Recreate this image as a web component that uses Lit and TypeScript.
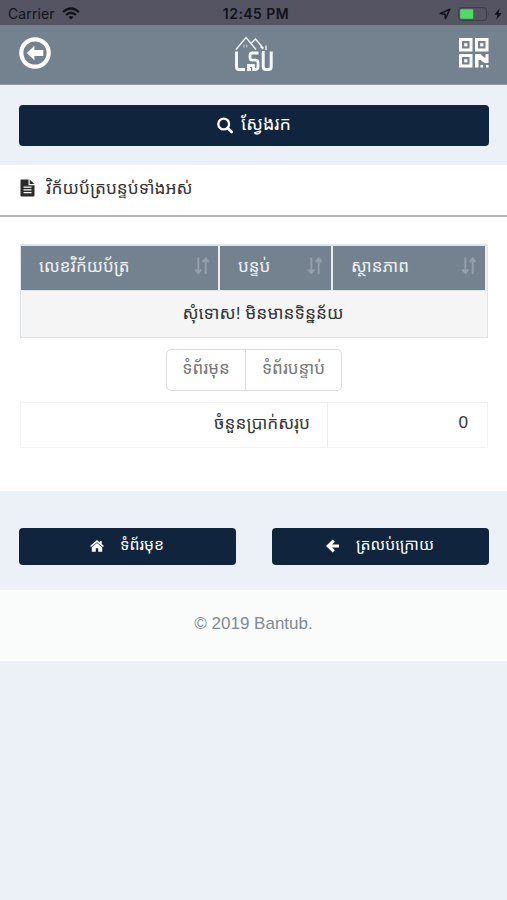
import { LitElement, html, css, svg } from "lit";
import { customElement } from "lit/decorators.js";

const sortIcon = html`<svg class="sort" viewBox="0 0 16 18" width="16" height="18">
  <path d="M4.300 0.500V15M1.300 12.500L4.300 16L7.300 12.500M11.700 17V3M8.700 5L11.700 1.500L14.700 5" fill="none" stroke="currentColor" stroke-width="2"/>
</svg>`;

const finder = (x: number, y: number) =>
  svg`<path d="M${x} ${y}h13.500v13.500h-13.500zM${x + 3} ${y + 3}v7.500h7.500v-7.500z" fill-rule="evenodd"/><rect x="${x + 5.2}" y="${y + 5.2}" width="3.200" height="3.200"/>`;

const wifiIcon = html`<svg width="18" height="13" viewBox="0 0 18 13" fill="none" stroke="currentColor" stroke-width="2.300">
  <path d="M1 5Q9-2 17 5M4 8Q9 3.500 14 8"/>
  <path d="M9 12.500L6.500 10Q9 8 11.500 10Z" fill="currentColor" stroke="none"/>
</svg>`;

const locationIcon = html`<svg width="12" height="12" viewBox="0 0 12 12" fill="none" stroke="currentColor" stroke-width="1.500" stroke-linejoin="round">
  <path d="M10.800 1.200L1.200 5.600L6 6.200L6.500 10.800Z"/>
</svg>`;

const batteryIcon = html`<svg width="33" height="14" viewBox="0 0 33 14">
  <rect x="0.600" y="0.600" width="28" height="12.800" rx="3" fill="none" stroke="#3c3c47" stroke-width="1"/>
  <rect x="2.200" y="2.200" width="13" height="9.600" rx="0.800" fill="#50dc64"/>
  <path d="M30.200 5Q32 7 30.200 9Z" fill="#3c3c47"/>
</svg>`;

const boltIcon = html`<svg width="8" height="12" viewBox="0 0 8 12" fill="currentColor"><path d="M5.600 0.300L0.400 6.800H3.400L2.300 11.700L7.700 4.900H4.600Z"/></svg>`;

const backIcon = html`<svg width="34" height="34" viewBox="0 0 34 34">
  <circle cx="17" cy="17" r="13.700" fill="none" stroke="#fff" stroke-width="4.200"/>
  <path d="M8.800 17L16.400 9.800V14H25.300V20H16.400V24.200Z" fill="#fff"/>
</svg>`;

const logo = html`<svg class="logo" width="40" height="38" viewBox="0 0 40 38" fill="none" stroke="#f4f7f9">
  <path d="M2 14.500L12 2.500L22 14.500M17 8.500L21.500 4L29.500 13.500M26.500 11.500L29 14M32 10.500V15" stroke-width="1.300"/>
  <path d="M10 9.500V12.500M12.800 9.500V12.500" stroke-width="1.400" opacity="0.500"/>
  <path d="M2.500 16.500V31.500Q2.500 34.500 5 34.500H11" stroke-width="3"/>
  <path d="M24.500 18H18.200Q16 18 16 20.500V22.500Q16 25.200 18.200 25.200H21.500Q24 25.200 24 27.700V31.800Q24 34.500 21.500 34.500H19.500V30.500H14.500V34.500H17" stroke-width="2.800"/>
  <path d="M28 17.500H29.200V31.500Q29.200 34.500 32 34.500H34.200Q37.200 34.500 37.200 31.500V16.500" stroke-width="3"/>
</svg>`;

const qrIcon = html`<svg width="30" height="30" viewBox="0 0 30 30" fill="#fff">
  ${finder(0, 0)}${finder(16, 0)}${finder(0, 16)}
  <path d="M16 16H21.500L25 19.500H26.500V16H29.500V25H25.500L21.500 22H19.500V29.500H16ZM21.500 27H24V29.500H21.500ZM27 27H29.500V29.500H27Z"/>
</svg>`;

const searchIcon = html`<svg width="16" height="17" viewBox="0 0 16 17" fill="none" stroke="currentColor">
  <circle cx="6.700" cy="7" r="5.400" stroke-width="2.300"/><path d="M10.600 11L14.600 15" stroke-width="2.700" stroke-linecap="round"/>
</svg>`;

const fileIcon = html`<svg width="15" height="18" viewBox="0 0 15 18" fill="#2c2c2c" fill-rule="evenodd">
  <path d="M1 0.500H8.500V6.200H14.500V16.500Q14.500 17.500 13.500 17.500H1.500Q0.500 17.500 0.500 16.500V1Q0.500 0.500 1 0.500ZM3.500 7.500V8.700H11.500V7.500ZM3.500 10.300V11.500H11.500V10.300ZM3.500 13.100V14.300H11.500V13.100Z"/>
  <path d="M9.700 0.500L14.300 5H9.700Z"/>
</svg>`;

const homeIcon = html`<svg width="14" height="12" viewBox="0 0 14 12" fill="currentColor">
  <path d="M7 0.100L9.800 2.400V1H11.700V4L13.900 5.900L12.900 7.100L7 2.300L1.100 7.100L0.100 5.900Z"/>
  <path d="M7 2.900L12.200 7.200V11.700H8.200V8.300H5.800V11.700H1.800V7.200Z"/>
</svg>`;

const arrowIcon = html`<svg width="14" height="14" viewBox="0 0 14 14" fill="none" stroke="currentColor">
  <path d="M7.800 1.700L2.200 7L7.800 12.300M2.500 7H13" stroke-width="3.100"/>
</svg>`;

@customElement("app-root")
export class AppRoot extends LitElement {
  static styles = css`
    :host { display: block; min-height: 900px; background: #ecf0f7; color: #333;
      font-family: "Liberation Sans", "Noto Sans Khmer", "Khmer OS Battambang", Battambang, sans-serif; font-size: 17px; }
    * { box-sizing: border-box; }
    svg { display: block; flex: none; }
    .status { height: 25px; background: #545463; color: #11121a; display: grid; grid-template-columns: 1fr auto 1fr; align-items: center; padding: 2px 5px 0 8px; }
    .left, .right { display: flex; align-items: center; }
    .left { gap: 7px; font-family: Inter, sans-serif; font-size: 14px; letter-spacing: 0.100px; }
    .right { justify-content: flex-end; }
    .right svg + svg { margin-left: 7px; }
    .right svg:last-child { margin-left: 3px; }
    .time { font-weight: 600; font-family: Inter, sans-serif; font-size: 14px; letter-spacing: 0.450px; margin-left: 2px; }
    .bar { height: 60px; background: #74828f; border-bottom: 1px solid #8f9aa5; display: grid; grid-template-columns: 1fr auto 1fr; align-items: center; padding: 0 18px 4px 18px; color: #fff; }
    .logo { margin-top: 3px; }
    .bar svg:last-child { justify-self: end; }
    .search-area { height: 80px; padding: 20px 18px 0 19px; }
    .btn { background: #10243e; color: #fff; border-radius: 4px; display: flex; align-items: center; justify-content: center; white-space: nowrap; }
    .search { height: 41px; gap: 8px; font-size: 18px; padding-bottom: 5px; }
    .search svg { margin-top: 4px; }
    .panel { background: #fff; height: 326px; }
    .title { height: 52px; border-bottom: 2px solid #b5b5b5; padding: 0 20px 6px; display: flex; align-items: center; gap: 11px; white-space: nowrap; font-size: 17.250px; }
    .title svg { margin-top: 2px; }
    .content { padding: 27px 19px 0 20px; }
    .table { border: 1px solid #dfe4e8; border-top-width: 2px; height: 94px; margin-bottom: 11px; }
    .head { display: grid; grid-template-columns: 199px 113px 1fr; height: 45px; background: #74828f; color: #eef2f5; border-bottom: 1px solid #e3e7ea; }
    .th { display: flex; align-items: center; justify-content: space-between; padding: 0 8px 6px 18px; white-space: nowrap; border-right: 2px solid #e8edf0; }
    .th svg { margin-top: 2px; }
    .sort { color: #939faa; }
    .empty { height: 46px; background: #f5f5f5; display: flex; align-items: center; justify-content: center; padding: 0 0 5px 18px; white-space: nowrap; font-size: 17.400px; }
    .pager { display: flex; width: 176px; height: 42px; margin: 0 0 11px 146px; border: 1px solid #ddd; border-radius: 5px; color: #777; }
    .page { display: flex; align-items: center; justify-content: center; width: 78px; padding-bottom: 6px; white-space: nowrap; }
    .page + .page { width: 96px; border-left: 1px solid #ddd; }
    .total { display: grid; grid-template-columns: 306px 1fr; height: 46px; border: 1px solid #f3f3f3; }
    .cell { display: flex; align-items: center; justify-content: flex-end; padding: 0 17px 6px; white-space: nowrap; font-size: 17.200px; }
    .cell + .cell { border-left: 1px solid #eee; padding: 0 19px 5px; }
    .actions { display: grid; grid-template-columns: 1fr 1fr; gap: 36px; height: 99px; padding: 37px 18px 25px 19px; }
    .action { height: 37px; gap: 16px; padding: 0 1px 6px 0; font-size: 15.800px; }
    .action svg { margin-top: 4px; }
    .foot { height: 72px; background: #fafbfb; border-bottom: 1px solid #f0f2f6; display: flex; align-items: center; justify-content: center; color: #818a94; padding-bottom: 4px; }
  `;

  render() {
    return html`
      <div class="status">
        <div class="left"><span>Carrier</span>${wifiIcon}</div>
        <span class="time">12:45 PM</span>
        <div class="right">${locationIcon}${batteryIcon}${boltIcon}</div>
      </div>
      <div class="bar">${backIcon}${logo}${qrIcon}</div>
      <div class="search-area"><div class="btn search">${searchIcon}<span>ស្វែងរក</span></div></div>
      <div class="panel">
        <div class="title">${fileIcon}<span>វិក័យប័ត្របន្ទប់ទាំងអស់</span></div>
        <div class="content">
          <div class="table">
            <div class="head">
              ${["លេខវិក័យប័ត្រ", "បន្ទប់", "ស្ថានភាព"].map((label) => html`<div class="th"><span>${label}</span>${sortIcon}</div>`)}
            </div>
            <div class="empty">សុំទោស! មិនមានទិន្នន័យ</div>
          </div>
          <div class="pager"><div class="page">ទំព័រមុន</div><div class="page">ទំព័របន្ទាប់</div></div>
          <div class="total"><div class="cell">ចំនួនប្រាក់សរុប</div><div class="cell">0</div></div>
        </div>
      </div>
      <div class="actions">
        <div class="btn action">${homeIcon}<span>ទំព័រមុខ</span></div>
        <div class="btn action">${arrowIcon}<span>ត្រលប់ក្រោយ</span></div>
      </div>
      <div class="foot">© 2019 Bantub.</div>
    `;
  }
}
